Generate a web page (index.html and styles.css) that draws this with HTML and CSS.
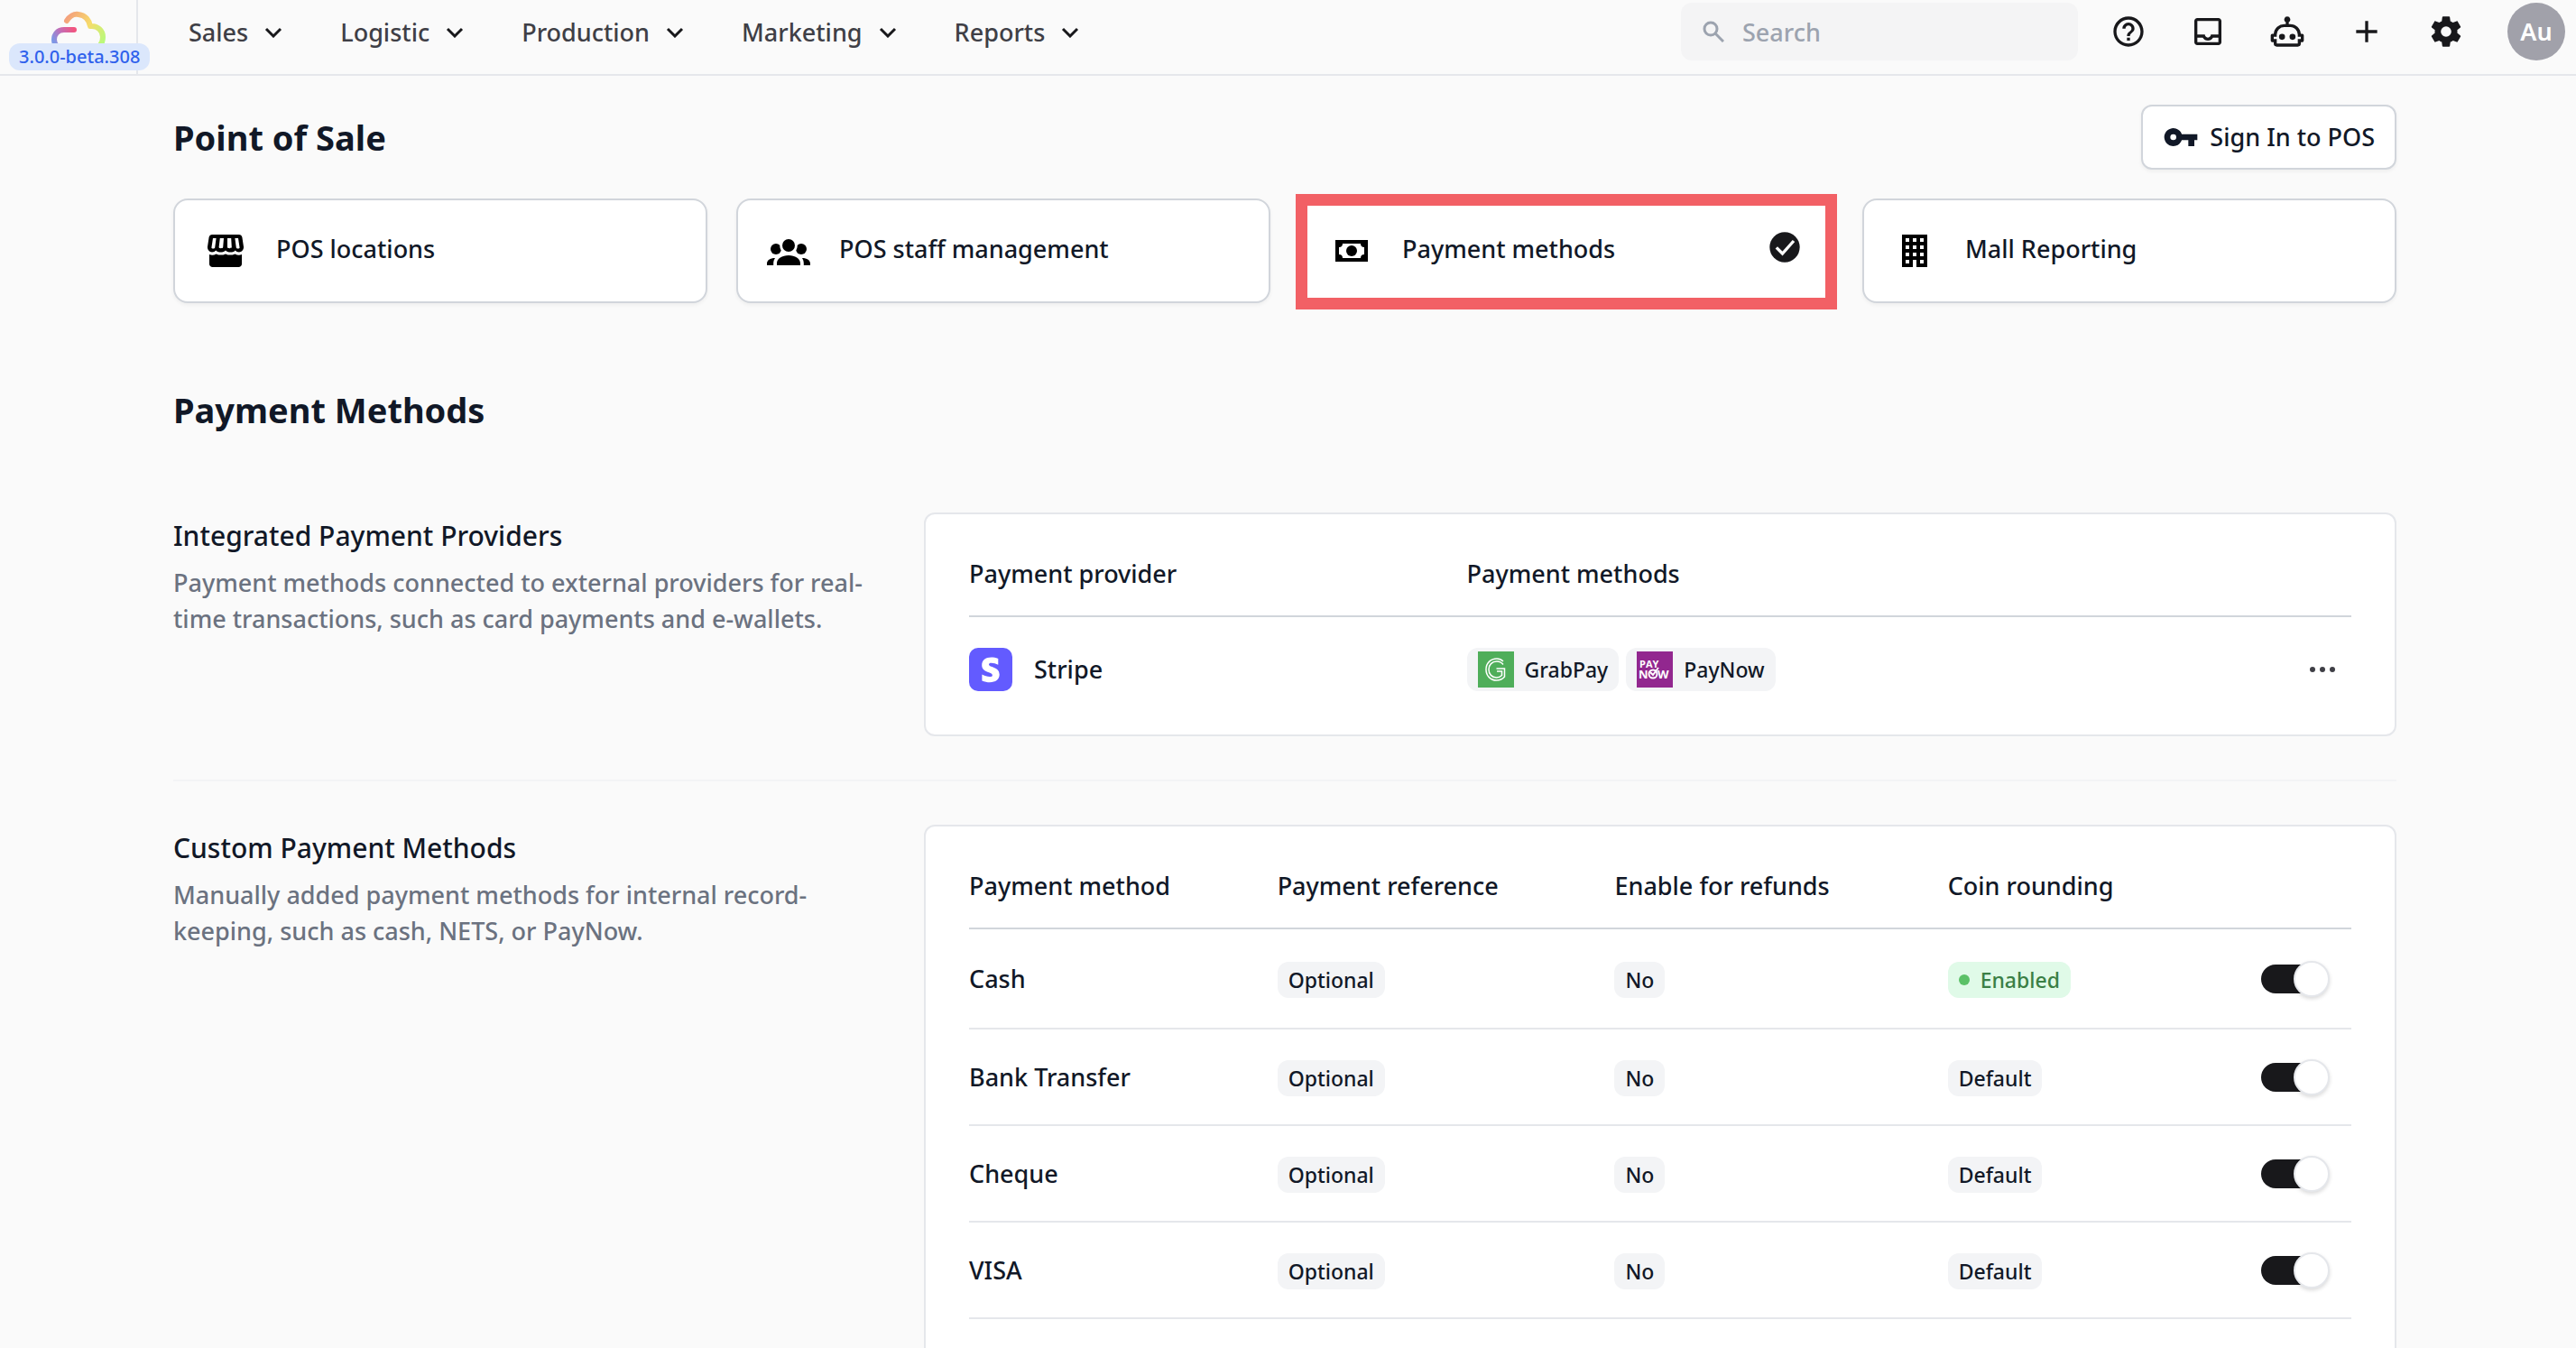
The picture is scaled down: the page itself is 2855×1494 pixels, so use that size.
FILE: index.html
```
<!DOCTYPE html>
<html lang="en">
<head>
    <meta charset="utf-8">
    <meta name="viewport" content="width=device-width, initial-scale=1.0">
    <title>Payment Methods</title>
    <link rel="stylesheet" href="styles.css">
</head>
<body>
    <header class="topbar">
        <a class="logo" href="#" aria-label="Home">
            <svg width="60" height="54" viewBox="0 0 60 54" fill="none" stroke-width="6" stroke-linecap="round" stroke-linejoin="round">
                <defs>
                    <linearGradient id="cloudTop" x1="16" y1="10" x2="58" y2="36" gradientUnits="userSpaceOnUse">
                        <stop offset="0" stop-color="#f4a27c"/>
                        <stop offset="0.5" stop-color="#f7dc6a"/>
                        <stop offset="1" stop-color="#b6fb7c"/>
                    </linearGradient>
                    <linearGradient id="cloudLeft" x1="26" y1="22" x2="4" y2="36" gradientUnits="userSpaceOnUse">
                        <stop offset="0" stop-color="#f2557f"/>
                        <stop offset="0.5" stop-color="#c56cb4"/>
                        <stop offset="1" stop-color="#7d98e6"/>
                    </linearGradient>
                </defs>
                <path d="M17 11C20 6 25 3 30 4C38 5 42 11 43 17C51 16 57 22 57 29C57 37 52 42 44 42" stroke="url(#cloudTop)"/>
                <path d="M25 21H14C7 21 3 26 3 32C3 38 8 42 16 42" stroke="url(#cloudLeft)"/>
            </svg>
        </a>
        <span class="version">3.0.0-beta.308</span>

        <nav class="menu">
            <button class="menu-item">Sales <svg class="chevron" viewBox="0 0 20 12"><path d="M2 2l8 8 8-8"/></svg></button>
            <button class="menu-item">Logistic <svg class="chevron" viewBox="0 0 20 12"><path d="M2 2l8 8 8-8"/></svg></button>
            <button class="menu-item">Production <svg class="chevron" viewBox="0 0 20 12"><path d="M2 2l8 8 8-8"/></svg></button>
            <button class="menu-item">Marketing <svg class="chevron" viewBox="0 0 20 12"><path d="M2 2l8 8 8-8"/></svg></button>
            <button class="menu-item">Reports <svg class="chevron" viewBox="0 0 20 12"><path d="M2 2l8 8 8-8"/></svg></button>
        </nav>

        <label class="search">
            <svg width="24" height="24" viewBox="0 0 24 24" fill="none" stroke="#9ca3af" stroke-width="3"><circle cx="9" cy="9" r="7"/><path d="M14 14l9 9"/></svg>
            <input type="search" placeholder="Search" aria-label="Search">
        </label>

        <div class="tools">
            <button class="tool" aria-label="Help">
                <svg viewBox="0 0 24 24"><path d="M11 18h2v-2h-2v2zm1-16C6.480 2 2 6.480 2 12s4.480 10 10 10 10-4.480 10-10S17.520 2 12 2zm0 18c-4.410 0-8-3.590-8-8s3.590-8 8-8 8 3.590 8 8-3.590 8-8 8zm0-14c-2.210 0-4 1.790-4 4h2c0-1.100.9-2 2-2s2 .9 2 2c0 2-3 1.750-3 5h2c0-2.250 3-2.500 3-5 0-2.210-1.790-4-4-4z"/></svg>
            </button>
            <button class="tool" aria-label="Inbox">
                <svg viewBox="0 0 24 24"><path d="M19 3H5c-1.100 0-2 .9-2 2v14c0 1.100.9 2 2 2h14c1.100 0 2-.9 2-2V5c0-1.100-.9-2-2-2zm0 16H5v-3h3.560c.690 1.190 1.970 2 3.450 2s2.750-.810 3.450-2H19v3zm0-5h-4.990c0 1.100-.9 2-2 2s-2-.9-2-2H5V5h14v9z"/></svg>
            </button>
            <button class="tool" aria-label="Assistant">
                <svg viewBox="0 0 24 24"><path fill-rule="evenodd" d="M12 2a2 2 0 0 1 1 3.730V7h1a7 7 0 0 1 7 6.500h1a1 1 0 0 1 1 1V18a1 1 0 0 1-1 1h-1v1a2 2 0 0 1-2 2H5a2 2 0 0 1-2-2v-1H2a1 1 0 0 1-1-1v-3.500a1 1 0 0 1 1-1h1A7 7 0 0 1 10 7h1V5.730A2 2 0 0 1 12 2zM10 9a5 5 0 0 0-5 5v1.500H3V17h2v3h14v-3h2v-1.500h-2V14a5 5 0 0 0-5-5z"/><circle cx="8.500" cy="15.500" r="2"/><circle cx="15.500" cy="15.500" r="2"/></svg>
            </button>
            <button class="tool" aria-label="Add">
                <svg viewBox="0 0 24 24"><path d="M19 13h-6v6h-2v-6H5v-2h6V5h2v6h6z"/></svg>
            </button>
            <button class="tool" aria-label="Settings">
                <svg viewBox="0 0 24 24"><path d="M12 15.500A3.500 3.500 0 0 1 8.500 12 3.500 3.500 0 0 1 12 8.500a3.500 3.500 0 0 1 3.500 3.500 3.500 3.500 0 0 1-3.500 3.500m7.430-2.530c.04-.320.07-.640.07-.970s-.03-.660-.07-1l2.110-1.630c.190-.150.240-.420.120-.640l-2-3.460c-.120-.220-.390-.310-.610-.220l-2.490 1c-.520-.390-1.060-.730-1.690-.980l-.370-2.650A.506.506 0 0 0 14 2h-4c-.250 0-.460.180-.5.420l-.370 2.650c-.630.250-1.170.590-1.690.980l-2.490-1c-.220-.090-.490 0-.610.220l-2 3.460c-.130.220-.070.490.12.640L4.570 11c-.04.340-.07.670-.07 1s.03.650.07.970l-2.110 1.660c-.190.150-.250.420-.12.640l2 3.460c.12.220.39.300.61.220l2.490-1.010c.520.400 1.060.740 1.690.990l.37 2.650c.04.240.25.420.5.420h4c.25 0 .46-.180.5-.420l.37-2.650c.63-.260 1.170-.590 1.690-.990l2.490 1.010c.22.080.49 0 .61-.220l2-3.460c.12-.220.07-.490-.12-.640z"/></svg>
            </button>
        </div>
        <button class="avatar">Au</button>
    </header>

    <main class="page">
        <div class="page-head">
            <h1>Point of Sale</h1>
            <button class="btn">
                <svg width="40" height="40" viewBox="0 0 24 24"><path d="M12.650 10A6 6 0 1 0 12.650 14H17v4h4v-4h2v-4zM7 14a2 2 0 1 1 0-4 2 2 0 0 1 0 4z"/></svg>
                Sign In to POS
            </button>
        </div>

        <nav class="tabs">
            <a class="tab" href="#">
                <svg class="tab-icon" viewBox="0 0 24 24">
                    <path fill-rule="evenodd" d="M4.600 3h14.800c.9 0 1.600.6 1.800 1.500l.8 5.200c.2 1.600-1 3-2.500 3-1 0-1.600-.4-2.100-1-.6.700-1.400 1-2.700 1s-2-.3-2.700-1c-.7.700-1.500 1-2.700 1s-2-.3-2.700-1c-.5.600-1.100 1-2.100 1-1.500 0-2.700-1.400-2.500-3l.8-5.200C3 3.600 3.700 3 4.600 3zM5 5l-.8 5.200c-.1.600 1.700.8 1.900 0L6.800 5zm3.900 0l-.6 5c0 .8 2.200.8 2.300 0l.4-5zm4.100 0v5c.1.800 2.300.8 2.400 0l-.3-5zm4.200 0l.7 5.200c.2.800 2 .6 1.900 0L19 5z"/>
                    <path d="M3 14c1.400.6 2.500.4 3.800-.3 1.700.8 3.400.8 5.200 0 1.700.8 3.400.8 5.200 0 1.300.7 2.400.9 3.800.3v5.200c0 1-.8 1.800-1.800 1.800H4.800c-1 0-1.800-.8-1.800-1.800z"/>
                </svg>
                <span>POS locations</span>
            </a>
            <a class="tab" href="#">
                <svg class="tab-icon" viewBox="0 0 24 24">
                    <circle cx="12" cy="9" r="3.500"/><circle cx="5" cy="11" r="3"/><circle cx="19" cy="11" r="3"/>
                    <path d="M5.500 20v-1c0-2.700 2.900-4.500 6.500-4.500s6.500 1.800 6.500 4.500v1zM0 20v-1c0-1.700 1.700-3 4.500-3-.6.900-.9 1.900-.9 3v1zM24 20v-1c0-1.700-1.700-3-4.500-3 .6.900.9 1.900.9 3v1z"/>
                    <path d="M7.700 8.500a4.500 4.500 0 0 0 1.600 4" fill="none" stroke="#fff"/><path d="M16.300 8.500a4.500 4.500 0 0 1-1.600 4" fill="none" stroke="#fff"/>
                </svg>
                <span>POS staff management</span>
            </a>
            <a class="tab tab-active" href="#">
                <svg class="tab-icon" viewBox="0 0 24 24">
                    <path fill-rule="evenodd" d="M3 6h18v12H3zM7 8a2 2 0 0 1-2 2v4a2 2 0 0 1 2 2h10a2 2 0 0 1 2-2v-4a2 2 0 0 1-2-2z"/>
                    <circle cx="12" cy="12" r="3"/>
                </svg>
                <span>Payment methods</span>
                <svg class="tab-check" viewBox="0 0 24 24"><circle cx="12" cy="12" r="10"/><path d="M6.500 12.200l4 4 7.500-8.400" fill="none" stroke="#fff" stroke-width="2"/></svg>
            </a>
            <a class="tab" href="#">
                <svg class="tab-icon" viewBox="0 0 24 24">
                    <path fill-rule="evenodd" d="M5 3h14v18h-6v-4h-2v4H5zM7 5v2h2V5zm4 0v2h2V5zm4 0v2h2V5zM7 9v2h2V9zm4 0v2h2V9zm4 0v2h2V9zm-8 4v2h2v-2zm4 0v2h2v-2zm4 0v2h2v-2zm-8 4v2h2v-2zm8 0v2h2v-2z"/>
                </svg>
                <span>Mall Reporting</span>
            </a>
        </nav>

        <h2>Payment Methods</h2>

        <section class="block">
            <div class="intro">
                <h3>Integrated Payment Providers</h3>
                <p>Payment methods connected to external providers for real-time transactions, such as card payments and e-wallets.</p>
            </div>
            <div class="panel">
                <table class="providers">
                    <thead>
                        <tr><th>Payment provider</th><th>Payment methods</th><th></th></tr>
                    </thead>
                    <tbody>
                        <tr>
                            <td>
                                <div class="provider">
                                    <svg width="48" height="48" viewBox="0 0 48 48"><rect width="48" height="48" rx="10" fill="#635bff"/><path fill="#fff" d="M22 18.500c0-1.200 1-1.700 2.600-1.700 2.400 0 5.300.7 7.700 2V12c-2.600-1-5.200-1.400-7.700-1.400-6.300 0-10.400 3.300-10.400 8.700 0 8.500 11.700 7.200 11.700 10.900 0 1.400-1.200 1.900-3 1.900-2.600 0-5.900-1.100-8.500-2.500v6.900c2.900 1.200 5.800 1.800 8.500 1.800 6.400 0 10.800-3.200 10.800-8.700 0-9.200-11.700-7.600-11.700-11.100z"/></svg>
                                    Stripe
                                </div>
                            </td>
                            <td>
                                <div class="badges">
                                    <span class="badge badge-icon">
                                        <svg width="40" height="40" viewBox="0 0 40 40" fill="none"><rect width="40" height="40" fill="#4fae5a"/><g stroke="#fff" stroke-width="1.500"><path d="M28 11c-2-2-4-3-7-3C14 8 9 13 9 20s5 12 11.500 12c4 0 7-1.500 9-4V19h-9"/><path d="M28 14.500c-2-2.500-4-3.500-7-3.500-5.500 0-9 4-9 9s3.500 9 8.500 9c3 0 4.500-1 6-2.500v-4.500H21"/></g></svg>
                                        GrabPay
                                    </span>
                                    <span class="badge badge-icon">
                                        <svg width="40" height="40" viewBox="0 0 40 40"><rect width="40" height="40" fill="#92278f"/><g fill="#fff" font-family="Open Sans, sans-serif" font-weight="700"><text x="3" y="18" font-size="11">PAY</text><text x="2" y="30" font-size="13">N</text><text x="23" y="30" font-size="13">W</text></g><circle cx="18" cy="25" r="4.500" fill="none" stroke="#fff" stroke-width="2"/><path d="M15 23l3 3 6-8" fill="none" stroke="#fff" stroke-width="2"/></svg>
                                        PayNow
                                    </span>
                                </div>
                            </td>
                            <td><button class="more" aria-label="More"><svg width="32" height="32" viewBox="0 0 32 32"><circle cx="5" cy="16" r="3"/><circle cx="16" cy="16" r="3"/><circle cx="27" cy="16" r="3"/></svg></button></td>
                        </tr>
                    </tbody>
                </table>
            </div>
        </section>

        <section class="block block-custom">
            <div class="intro">
                <h3>Custom Payment Methods</h3>
                <p>Manually added payment methods for internal record-keeping, such as cash, NETS, or PayNow.</p>
            </div>
            <div class="panel panel-tall">
                <table class="methods">
                    <thead>
                        <tr><th>Payment method</th><th>Payment reference</th><th>Enable for refunds</th><th>Coin rounding</th><th></th></tr>
                    </thead>
                    <tbody>
                        <tr class="row-first">
                            <td>Cash</td>
                            <td><span class="badge">Optional</span></td>
                            <td><span class="badge">No</span></td>
                            <td><span class="badge badge-green"><i class="dot"></i>Enabled</span></td>
                            <td><input class="switch" type="checkbox" aria-label="Cash" checked></td>
                        </tr>
                        <tr>
                            <td>Bank Transfer</td>
                            <td><span class="badge">Optional</span></td>
                            <td><span class="badge">No</span></td>
                            <td><span class="badge">Default</span></td>
                            <td><input class="switch" type="checkbox" aria-label="Bank Transfer" checked></td>
                        </tr>
                        <tr>
                            <td>Cheque</td>
                            <td><span class="badge">Optional</span></td>
                            <td><span class="badge">No</span></td>
                            <td><span class="badge">Default</span></td>
                            <td><input class="switch" type="checkbox" aria-label="Cheque" checked></td>
                        </tr>
                        <tr>
                            <td>VISA</td>
                            <td><span class="badge">Optional</span></td>
                            <td><span class="badge">No</span></td>
                            <td><span class="badge">Default</span></td>
                            <td><input class="switch" type="checkbox" aria-label="VISA" checked></td>
                        </tr>
                    </tbody>
                </table>
            </div>
        </section>
    </main>
</body>
</html>
```
FILE: styles.css
```
*, *::before, *::after {
    box-sizing: border-box;
}
body {
    margin: 0;
    height: 100vh;
    overflow: hidden;
    background-color: #fafafa;
    color: #111827;
    font-family: "Segoe UI", "Noto Sans", "Open Sans", sans-serif;
    font-size: 27px;
    font-weight: 500;
    line-height: 40px;
}
button, input {
    font: inherit;
    color: inherit;
}
button {
    border: none;
    background: none;
    padding: 0;
    cursor: pointer;
}
svg {
    display: block;
    flex: none;
}

/* top bar */
.topbar {
    position: relative;
    display: flex;
    align-items: center;
    height: 84px;
    padding: 0 12px 12px 0;
    border-bottom: 2px solid #e5e7eb;
}
.logo {
    width: 153px;
    height: 82px;
    margin-bottom: -12px;
    padding: 12px 0 0 57px;
    border-right: 2px solid #e5e7eb;
}
.version {
    position: absolute;
    left: 10px;
    top: 48px;
    padding: 0 11px;
    border-radius: 12px;
    background-color: #dbe7fc;
    color: #2f61ec;
    font-size: 20px;
    line-height: 30px;
}
.menu {
    display: flex;
    gap: 64px;
    margin-left: 56px;
    color: #3f3f46;
}
.menu-item {
    display: flex;
    align-items: center;
    gap: 18px;
    padding-top: 2px;
}
.chevron {
    width: 20px;
    height: 12px;
    fill: none;
    stroke: #18181b;
    stroke-width: 3;
}
.search {
    display: flex;
    align-items: center;
    gap: 20px;
    width: 440px;
    height: 64px;
    margin-left: auto;
    padding: 0 24px;
    border-radius: 12px;
    background-color: #f4f4f5;
}
.search input {
    width: 100%;
    padding: 2px 0 0;
    border: none;
    outline: none;
    background: none;
}
.search input::placeholder {
    color: #9ca3af;
}
.tools {
    display: flex;
    gap: 48px;
    margin: 0 48px 0 36px;
}
.tool {
    width: 40px;
    height: 40px;
    fill: #18181b;
}
.avatar {
    width: 64px;
    height: 64px;
    border-radius: 50%;
    background-color: #a1a1aa;
    color: white;
    font-weight: 600;
}

/* page */
.page {
    padding: 32px 199px 0 192px;
}
h1, h2, h3, p {
    margin: 0;
}
h1, h2 {
    font-size: 38px;
    font-weight: 700;
    line-height: 56px;
}
.page-head {
    display: flex;
    align-items: center;
    justify-content: space-between;
    margin-bottom: 32px;
}
.btn {
    display: flex;
    align-items: center;
    gap: 12px;
    height: 72px;
    padding: 0 22px;
    border: 2px solid #d1d5db;
    border-radius: 12px;
    background-color: white;
    fill: #111827;
    box-shadow: 0 2px 4px rgba(0, 0, 0, 0.05);
}
.tabs {
    display: grid;
    grid-template-columns: repeat(4, 1fr);
    gap: 32px;
    margin-bottom: 90px;
}
.tab {
    position: relative;
    display: flex;
    align-items: center;
    height: 116px;
    padding: 0 32px;
    border: 2px solid #d1d5db;
    border-radius: 16px;
    background-color: white;
    color: inherit;
    text-decoration: none;
    box-shadow: 0 2px 4px rgba(0, 0, 0, 0.05);
}
.tab-icon {
    width: 48px;
    height: 48px;
    margin-right: 32px;
}
.tab span {
    padding-bottom: 4px;
}
.tab-check {
    width: 40px;
    height: 40px;
    margin: 0 0 8px auto;
    fill: #18181b;
}
.tab-active::after {
    content: "";
    position: absolute;
    inset: -7px -6px -9px;
    border: 13px solid #f26065;
}

.block {
    display: grid;
    grid-template-columns: repeat(3, 1fr);
    gap: 32px;
    margin-top: 86px;
}
.block-custom {
    margin-top: 48px;
    padding-top: 48px;
    border-top: 2px solid #f3f4f6;
}
.intro {
    padding-right: 32px;
}
.intro h3 {
    padding-top: 4px;
    font-size: 30px;
    font-weight: 500;
    line-height: 44px;
    margin-bottom: 10px;
}
.intro p {
    color: #6b7280;
}
.panel {
    grid-column: span 2;
    padding: 46px 48px;
    border: 2px solid #e5e7eb;
    border-radius: 12px;
    background-color: white;
}
.panel-tall {
    padding-bottom: 120px;
}
table {
    width: 100%;
    table-layout: fixed;
    border-collapse: collapse;
}
th, td {
    padding: 0;
    text-align: left;
    font-weight: 500;
}
th {
    height: 66px;
    padding-bottom: 26px;
    border-bottom: 2px solid #d1d5db;
}

.providers th:nth-child(1) {
    width: 36%;
}
.providers th:nth-child(3) {
    width: 10%;
}
.providers td {
    height: 84px;
    padding: 34px 0 2px;
}
.provider, .badges {
    display: flex;
    align-items: center;
}
.provider {
    gap: 24px;
}
.badges {
    gap: 8px;
}
.badge {
    display: inline-flex;
    align-items: center;
    height: 40px;
    padding: 0 12px;
    border-radius: 12px;
    background-color: #f3f4f6;
    font-size: 23px;
    vertical-align: middle;
}
.badge-icon {
    height: 48px;
    gap: 12px;
}
.badge-green {
    gap: 12px;
    background-color: #e0fae8;
    color: #3a7f45;
}
.dot {
    width: 12px;
    height: 12px;
    border-radius: 50%;
    background-color: #5bc167;
}
.more {
    display: block;
    margin: 0 16px 0 auto;
    fill: #3f3f46;
}

.methods th:nth-child(1) {
    width: 22.3%;
}
.methods th:nth-child(2) {
    width: 24.4%;
}
.methods th:nth-child(3) {
    width: 24.1%;
}
.methods td {
    height: 107px;
    border-bottom: 2px solid #e5e7eb;
}
.methods .row-first td {
    height: 111px;
}

/* switch */
.switch {
    display: block;
    position: relative;
    appearance: none;
    width: 72px;
    height: 32px;
    margin: 0 28px 0 auto;
    border-radius: 16px;
    background-color: #d1d5db;
    cursor: pointer;
}
.switch:checked {
    background-color: #18181b;
}
.switch::before {
    content: "";
    position: absolute;
    top: -4px;
    left: -4px;
    width: 40px;
    height: 40px;
    border: 2px solid #e5e7eb;
    border-radius: 50%;
    background-color: white;
    box-shadow: 0 2px 4px rgba(0, 0, 0, 0.15);
}
.switch:checked::before {
    left: 36px;
}
```
